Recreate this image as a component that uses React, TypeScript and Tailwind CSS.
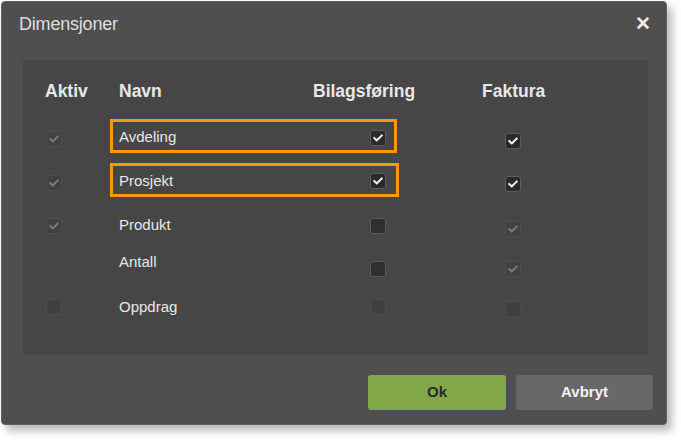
import React from "react";

type Kind = "on" | "off" | "dison" | "disoff" | "none";

function Check({ color }: { color: string }) {
  return (
    <svg width="10" height="10" viewBox="0 0 512 512" className="block">
      <path
        fill={color}
        d="M173.898 439.404l-166.4-166.4c-9.997-9.997-9.997-26.206 0-36.204l36.203-36.204c9.997-9.998 26.207-9.998 36.204 0L192 312.69 432.095 72.596c9.997-9.997 26.207-9.997 36.204 0l36.203 36.204c9.997 9.997 9.997 26.206 0 36.204l-294.4 294.401c-9.998 9.997-26.207 9.997-36.204-.001z"
      />
    </svg>
  );
}

function Box({ kind }: { kind: Kind }) {
  if (kind === "none") return <div className="w-[16px] h-[16px]" />;
  if (kind === "on")
    return (
      <div className="w-[16px] h-[16px] rounded-[3px] bg-[#2a2a2a] border border-[#5c5c5c] flex items-center justify-center">
        <Check color="#f2f2f2" />
      </div>
    );
  if (kind === "off")
    return <div className="w-[16px] h-[16px] rounded-[3px] bg-[#2f2f2f] border border-[#5a5a5a]" />;
  if (kind === "dison")
    return (
      <div className="w-[16px] h-[16px] rounded-[3px] bg-[#414141] border border-[#4e4e4e] flex items-center justify-center">
        <Check color="#7c7c7c" />
      </div>
    );
  return <div className="w-[16px] h-[16px] rounded-[3px] bg-[#404040] border border-[#4d4d4d]" />;
}

export default function App() {
  return (
    <div className="w-[681px] h-[440px] bg-white pt-px pl-px font-['Liberation_Sans',Arial,sans-serif]">
      <div className="w-[666px] h-[424px] bg-[#4f4f4f] rounded-[4px] border border-[#616161] shadow-[5px_6px_8px_rgba(0,0,0,0.28)] flex flex-col">
        {/* title bar */}
        <div className="h-[58px] flex items-start justify-between pl-[17px] pr-[15px] pt-[12px]">
          <span className="text-[18px] leading-[20px] text-[#dedede] tracking-[-0.2px]">Dimensjoner</span>
          <span className="text-[19px] leading-[20px] font-bold text-[#ececec]">✕</span>
        </div>

        {/* panel */}
        <div className="ml-[21px] w-[625px] h-[295px] bg-[#464646] pl-[22px] flex flex-col text-[#e8e8e8]">
          {/* header */}
          <div className="h-[54px] flex items-start pt-[21px] text-[17.5px] leading-[20px] font-bold">
            <div className="w-[74px]">Aktiv</div>
            <div className="w-[194px]">Navn</div>
            <div className="w-[169px]">Bilagsføring</div>
            <div>Faktura</div>
          </div>

          {/* row 1 */}
          <div className="h-[44px] flex items-center text-[15px] leading-[18px]">
            <div className="w-[65px] pl-[1px] pt-[5px]"><Box kind="dison" /></div>
            <div className="w-[289px]">
              <div className="w-[287px] h-[34px] border-[3px] border-[#f7990c] flex items-center justify-between pl-[6px] pr-[8px]">
                <span className="pt-[2px]">Avdeling</span>
                <span className="pt-[3px]"><Box kind="on" /></span>
              </div>
            </div>
            <div className="ml-[106px] pt-[9px]"><Box kind="on" /></div>
          </div>

          {/* row 2 */}
          <div className="h-[44px] flex items-center text-[15px] leading-[18px]">
            <div className="w-[65px] pl-[1px] pt-[5px]"><Box kind="dison" /></div>
            <div className="w-[289px]">
              <div className="w-[289px] h-[34px] border-[3px] border-[#f7990c] flex items-center justify-between pl-[6px] pr-[10px]">
                <span className="pt-[2px]">Prosjekt</span>
                <span className="pt-[2px]"><Box kind="on" /></span>
              </div>
            </div>
            <div className="ml-[106px] pt-[8px]"><Box kind="on" /></div>
          </div>

          {/* row 3 */}
          <div className="h-[44px] flex items-center text-[15px] leading-[18px]">
            <div className="w-[65px] pl-[1px] pt-[4px]"><Box kind="dison" /></div>
            <div className="w-[289px] flex items-center justify-between pl-[9px] pr-[13px]">
              <span className="pt-[2px]">Produkt</span>
              <span className="pt-[4px]"><Box kind="off" /></span>
            </div>
            <div className="ml-[106px] pt-[9px]"><Box kind="dison" /></div>
          </div>

          {/* row 4 */}
          <div className="h-[38px] flex items-start text-[15px] leading-[18px]">
            <div className="w-[65px] pl-[1px]"><Box kind="none" /></div>
            <div className="w-[289px] flex items-start justify-between pl-[9px] pr-[13px]">
              <span className="pt-[7px]">Antall</span>
              <span className="pt-[15px]"><Box kind="off" /></span>
            </div>
            <div className="ml-[106px] pt-[15px]"><Box kind="dison" /></div>
          </div>

          {/* row 5 */}
          <div className="h-[44px] flex items-center text-[15px] leading-[18px]">
            <div className="w-[65px] pl-[1px] pt-[2px]"><Box kind="disoff" /></div>
            <div className="w-[289px] flex items-center justify-between pl-[9px] pr-[13px]">
              <span className="pt-[2px]">Oppdrag</span>
              <span className="pt-[2px]"><Box kind="disoff" /></span>
            </div>
            <div className="ml-[106px] pt-[6px]"><Box kind="disoff" /></div>
          </div>
        </div>

        {/* buttons */}
        <div className="mt-[20px] flex justify-end gap-[10px] pr-[13px]">
          <button className="w-[138px] h-[35px] rounded-[3px] bg-[#83a84a] text-[#2a2a2a] text-[15px] font-bold">Ok</button>
          <button className="w-[137px] h-[35px] rounded-[3px] bg-[#686868] text-[#f4f4f4] text-[15px] font-bold">Avbryt</button>
        </div>
      </div>
    </div>
  );
}
